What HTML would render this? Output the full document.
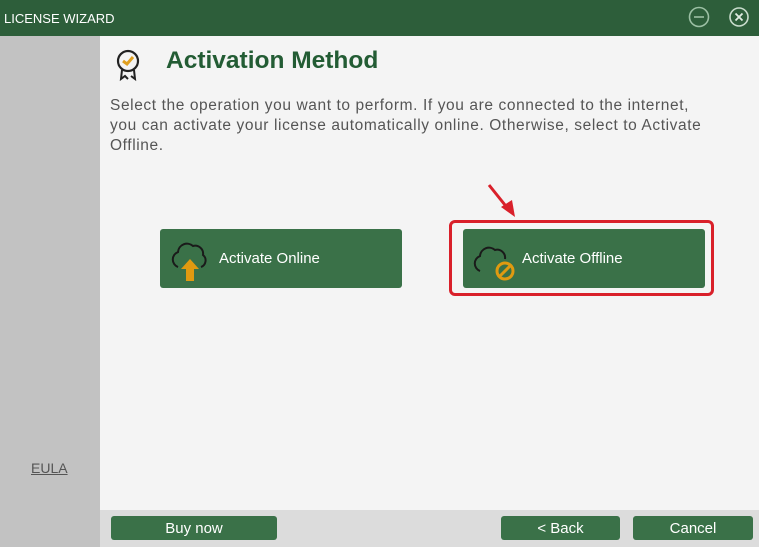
<!DOCTYPE html>
<html><head><style>
*{margin:0;padding:0;box-sizing:border-box}
body{width:759px;height:547px;overflow:hidden;background:#f4f4f4;font-family:"Liberation Sans",sans-serif;position:relative}
.a{position:absolute}
.btn{position:absolute;background:#3a7148;border-radius:3px;color:#fff}
.fb{font-size:15px;text-align:center;line-height:26px}
</style></head><body>
<div class="a" style="left:0;top:0;width:759px;height:36px;background:#2d5e3a"></div>
<div class="a" style="left:4px;top:11px;color:#fff;font-size:13px">LICENSE WIZARD</div>
<svg class="a" style="left:686px;top:5px" width="26" height="24"><circle cx="13" cy="12" r="9.5" fill="none" stroke="#9cc0a4" stroke-width="1.6"/><line x1="8" y1="12" x2="18" y2="12" stroke="#9cc0a4" stroke-width="1.6"/></svg>
<svg class="a" style="left:727px;top:5px" width="24" height="24"><circle cx="12" cy="12" r="9" fill="none" stroke="#c8dccc" stroke-width="1.6"/><path d="M8.5 8.5L15.5 15.5M15.5 8.5L8.5 15.5" stroke="#e0ece2" stroke-width="1.8"/></svg>
<div class="a" style="left:0;top:36px;width:100px;height:511px;background:#c2c2c2"></div>
<div class="a" style="left:100px;top:510px;width:659px;height:37px;background:#dcdcdc"></div>
<div class="a" style="left:31px;top:460px;color:#555;font-size:14px;text-decoration:underline">EULA</div>
<svg class="a" style="left:114px;top:47px" width="30" height="36"><circle cx="14" cy="14" r="10" fill="none" stroke="#222" stroke-width="2.2"/><path d="M9 14l4 3 6-7" fill="none" stroke="#e0a020" stroke-width="3"/><path d="M8 23l-1 9 4-3 3 3M20 23l1 9-4-3" fill="none" stroke="#222" stroke-width="2"/></svg>
<div class="a" style="left:166px;top:47px;color:#235c34;font-size:24.5px;font-weight:bold">Activation Method</div>
<div class="a" style="left:110px;top:96px;width:660px;white-space:nowrap;color:#555;font-size:15.5px;letter-spacing:0.6px;line-height:20px">Select the operation you want to perform. If you are connected to the internet,<br>you can activate your license automatically online. Otherwise, select to Activate<br>Offline.</div>
<div class="btn" style="left:160px;top:229px;width:242px;height:59px"></div>
<svg class="a" style="left:168px;top:237px" width="44" height="46"><path d="M10 30a8 8 0 0 1 0-15a9 9 0 0 1 15-6a8 8 0 0 1 10 9a7 7 0 0 1-2 12" fill="none" stroke="#1a1a1a" stroke-width="2"/><path d="M18 44V32h-5l9-10 9 10h-5v12z" fill="#e09a10"/></svg>
<div class="a" style="left:219px;top:250px;color:#fff;font-size:15px">Activate Online</div>
<div class="a" style="left:449px;top:220px;width:265px;height:76px;border:3px solid #d9202a;border-radius:6px"></div>
<div class="btn" style="left:463px;top:229px;width:242px;height:59px"></div>
<svg class="a" style="left:470px;top:238px" width="50" height="46"><path d="M10 33a8 8 0 0 1 0-15a9 9 0 0 1 15-6a8 8 0 0 1 10 9" fill="none" stroke="#1a1a1a" stroke-width="2"/><circle cx="35" cy="33" r="8" fill="none" stroke="#e09a10" stroke-width="3"/><line x1="30" y1="38" x2="40" y2="28" stroke="#e09a10" stroke-width="3"/></svg>
<div class="a" style="left:522px;top:250px;color:#fff;font-size:15px">Activate Offline</div>
<svg class="a" style="left:485px;top:182px" width="35" height="40"><line x1="4" y1="3" x2="24" y2="28" stroke="#d9202a" stroke-width="3"/><path d="M16 25l14 10-3-17z" fill="#d9202a"/></svg>
<div class="btn fb" style="left:111px;top:516px;width:166px;height:24px">Buy now</div>
<div class="btn fb" style="left:501px;top:516px;width:119px;height:24px">&lt; Back</div>
<div class="btn fb" style="left:633px;top:516px;width:120px;height:24px">Cancel</div>
</body></html>
